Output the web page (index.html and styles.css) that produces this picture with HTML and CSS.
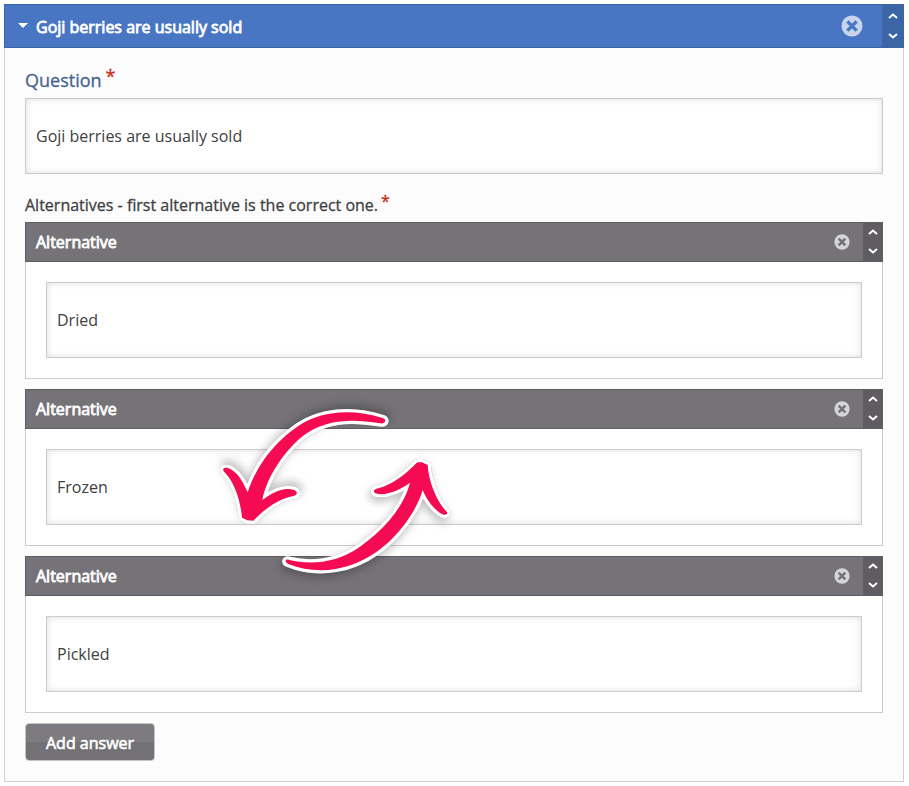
FILE: index.html
```html
<!DOCTYPE html>
<html lang="en">
<head>
<meta charset="utf-8">
<title>Goji berries are usually sold</title>
<link rel="stylesheet" href="styles.css">
</head>
<body>
<svg class="defs" aria-hidden="true">
  <symbol id="remove" viewBox="0 0 22 22"><circle class="disc" cx="11" cy="11" r="10.5"/><path class="cross" d="M6.4 6.4l9.2 9.2M15.6 6.4l-9.2 9.2"/></symbol>
  <symbol id="up" viewBox="0 0 10 6"><path class="chevron" d="M1 5l4-3.4L9 5"/></symbol>
  <symbol id="down" viewBox="0 0 10 6"><path class="chevron" d="M1 1l4 3.4L9 1"/></symbol>
</svg>
<main class="panel">
  <header class="bar bar-main">
    <button class="title" type="button" aria-expanded="true"><span class="caret"></span>Goji berries are usually sold</button>
    <button class="remove" type="button" aria-label="Remove question"><svg><use href="#remove"/></svg></button>
    <div class="order">
      <button type="button" aria-label="Move up"><svg><use href="#up"/></svg></button>
      <button type="button" aria-label="Move down"><svg><use href="#down"/></svg></button>
    </div>
  </header>
  <div class="content">
    <label class="question-label" for="question">Question<span class="required">*</span></label>
    <input class="field" id="question" type="text" value="Goji berries are usually sold">
    <h2 class="list-label">Alternatives - first alternative is the correct one.<span class="required">*</span></h2>
    <div class="list">
      <section class="item">
        <header class="bar">
          <label class="title" for="alt1">Alternative</label>
          <button class="remove" type="button" aria-label="Remove alternative"><svg><use href="#remove"/></svg></button>
          <div class="order">
            <button type="button" aria-label="Move up"><svg><use href="#up"/></svg></button>
            <button type="button" aria-label="Move down"><svg><use href="#down"/></svg></button>
          </div>
        </header>
        <div class="item-body"><input class="field" id="alt1" type="text" value="Dried"></div>
      </section>
      <section class="item">
        <header class="bar">
          <label class="title" for="alt2">Alternative</label>
          <button class="remove" type="button" aria-label="Remove alternative"><svg><use href="#remove"/></svg></button>
          <div class="order">
            <button type="button" aria-label="Move up"><svg><use href="#up"/></svg></button>
            <button type="button" aria-label="Move down"><svg><use href="#down"/></svg></button>
          </div>
        </header>
        <div class="item-body"><input class="field" id="alt2" type="text" value="Frozen"></div>
      </section>
      <section class="item">
        <header class="bar">
          <label class="title" for="alt3">Alternative</label>
          <button class="remove" type="button" aria-label="Remove alternative"><svg><use href="#remove"/></svg></button>
          <div class="order">
            <button type="button" aria-label="Move up"><svg><use href="#up"/></svg></button>
            <button type="button" aria-label="Move down"><svg><use href="#down"/></svg></button>
          </div>
        </header>
        <div class="item-body"><input class="field" id="alt3" type="text" value="Pickled"></div>
      </section>
      <svg class="swap" viewBox="0 0 750 570" aria-hidden="true">
        <path class="arrow arrow-down" d="M520 70C420 38 330 50 265 93C195 140 140 210 113 292C100 262 80 226 53 219C40 216 34 224 46 234C75 265 92 320 96 368L112 376L130 377C165 340 210 310 250 303C264 300 264 288 250 284C215 276 185 295 157 315C170 250 215 180 270 130C340 72 420 70 510 85C527 88 530 74 520 70Z"/>
        <path class="arrow arrow-up" d="M238 495C300 510 380 505 450 455C520 405 580 340 600 263C570 285 535 300 505 297C488 295 486 284 505 280C545 270 585 240 622 202L636 202L653 210C656 260 680 320 710 350C716 358 705 364 690 354C665 335 648 310 638 285C620 350 560 430 500 470C430 520 330 545 235 507C222 501 226 490 238 495Z"/>
      </svg>
    </div>
    <button class="add" type="button">Add answer</button>
  </div>
</main>
</body>
</html>
```
FILE: styles.css
```css
* { box-sizing: border-box; }

body {
  margin: 4px 5px 4px 4px;
  background: #fff;
  color: #3f3f42;
  font: 16px/24px "Open Sans", sans-serif;
}

button {
  padding: 0;
  border: 0;
  background: none;
  color: inherit;
  font: inherit;
}

.defs { display: none; }

.panel {
  border: 1px solid #d0d0d1;
  border-top: 0;
  background: #fcfcfc;
}

.bar {
  --disc: #d5d4d6;
  --cross: #757377;
  display: flex;
  align-items: center;
  height: 40px;
  margin: 0 -1px;
  padding-left: 10px;
  border: 1px solid #5f5d61;
  border-right: 0;
  background: #757377;
  color: #fff;
}

.bar-main {
  --disc: #c8d5ed;
  --cross: #4876c2;
  height: 44px;
  border-color: #3a66a8;
  background: #4876c2;
}

.title {
  display: flex;
  flex: 1;
  align-items: center;
  text-align: left;
  -webkit-text-stroke: 0.8px currentColor;
}

.bar-main .title { padding-top: 2px; }

.caret {
  margin: 0 8px 4px 3px;
  border: 5px solid transparent;
  border-top: 5px solid #fff;
  border-bottom: 0;
}

.remove { margin-right: 13px; }

.remove svg {
  display: block;
  width: 16px;
  height: 16px;
}

.bar-main .remove { margin-right: 19px; }

.bar-main .remove svg {
  width: 22px;
  height: 22px;
}

.disc { fill: var(--disc); }
.cross { fill: none; stroke: var(--cross); stroke-width: 3.4; }

.order {
  display: flex;
  flex-direction: column;
  justify-content: space-between;
  align-self: stretch;
  width: 20px;
  margin: -1px 0;
  padding: 7px 1px 8px 0;
  background: #5f5d61;
}

.bar-main .order {
  width: 22px;
  padding: 9px 1px 9px 0;
  background: #3b65a6;
}

.order button {
  display: flex;
  justify-content: center;
}

.order svg {
  width: 10px;
  height: 6px;
}

.chevron { fill: none; stroke: #fff; stroke-width: 2; }

.content { padding: 20px; }

.question-label,
.list-label {
  display: block;
  margin: 0;
  font-weight: 400;
  -webkit-text-stroke: 0.3px currentColor;
}

.question-label {
  height: 30px;
  color: #45648f;
  font-size: 18px;
  line-height: 24px;
}

.list-label {
  height: 28px;
  margin-top: 20px;
  font-size: 16px;
  line-height: 22px;
}

.required {
  margin-left: 4px;
  color: #c92d14;
  font-size: 18px;
  line-height: 0;
  vertical-align: 4px;
}

.list-label .required {
  margin-left: 3px;
  font-size: 16px;
}

.field {
  display: block;
  width: 100%;
  height: 76px;
  padding: 0 10px;
  border: 1px solid #cdcccd;
  border-radius: 0;
  outline: 0;
  background: #fff;
  box-shadow: inset 0 0 7px #ddd;
  color: #404040;
  font: inherit;
}

.list {
  position: relative;
  display: grid;
  gap: 10px;
}

.item {
  border: 1px solid #cdcccd;
  border-top: 0;
  background: #fff;
}

.item-body { padding: 20px; }

.swap {
  position: absolute;
  left: 185px;
  top: 173px;
  width: 250px;
  height: 190px;
  overflow: visible;
  pointer-events: none;
}

.arrow {
  fill: #f40b52;
  stroke: #fff;
  stroke-width: 20;
  stroke-linejoin: round;
  paint-order: stroke;
}

.arrow-down { filter: drop-shadow(0 0 1px #999) drop-shadow(5px -12px 12px rgba(0, 0, 0, 0.25)); }
.arrow-up { filter: drop-shadow(0 0 1px #999) drop-shadow(-5px 12px 12px rgba(0, 0, 0, 0.25)); }

.add {
  display: block;
  height: 38px;
  margin-top: 10px;
  padding: 2px 20px 0;
  border: 1px solid #c4c4c5;
  border-radius: 4px;
  background: linear-gradient(#7d7b7f 50%, #737175 50%);
  color: #fff;
  -webkit-text-stroke: 0.6px currentColor;
}
```
